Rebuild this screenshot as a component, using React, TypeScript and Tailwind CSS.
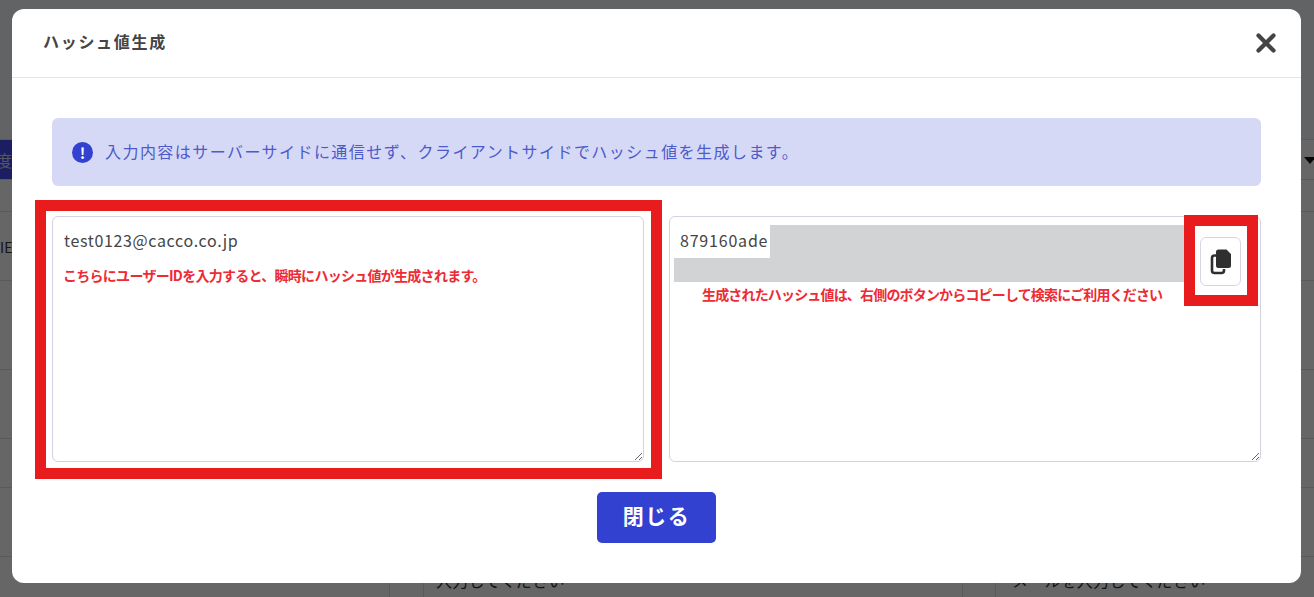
import { X } from 'lucide-react';

const font = "font-['Noto_Sans_CJK_JP','Noto_Sans',sans-serif]";

function CopyIcon() {
  return (
    <svg width="22" height="26" viewBox="0 0 22 26" fill="none">
      <path d="M8 6.5H4.5A2.5 2.5 0 0 0 2 9v12.5A2.5 2.5 0 0 0 4.500 24h7a2.500 2.500 0 0 0 2.500-2.500V20" stroke="#2f2f2f" strokeWidth="2.6" />
      <path d="M8.500 0.500h8l4.500 4.500v11.500a2.500 2.500 0 0 1-2.500 2.500h-10a2.500 2.500 0 0 1-2.500-2.500V3a2.500 2.500 0 0 1 2.500-2.500z" fill="#2f2f2f" />
    </svg>
  );
}

function Background() {
  return (
    <div className="flex flex-col h-[597px] bg-white text-[#333]">
      <div className="h-[140px] shrink-0 border-b border-[#dee2e6] bg-[#f6f8fb]" />
      <div className="h-[40px] shrink-0 flex justify-between border-b border-[#dee2e6]">
        <div className="w-[24px] bg-[#464cf5] flex justify-end items-center text-[16px] text-[#ddd] whitespace-nowrap pr-[12px]">度</div>
        <div className="w-[10px] overflow-hidden pt-[17px]">
          <div className="w-0 h-0 border-x-[6px] border-x-transparent border-t-[7px] border-t-[#111]" />
        </div>
      </div>
      <div className="h-[32px] shrink-0 border-b border-[#dee2e6]" />
      <div className="h-[69px] shrink-0 border-b border-[#dee2e6] flex items-center">
        <div className="-ml-[8px] mt-[3px] text-[14px] whitespace-nowrap">VIE</div>
      </div>
      <div className="h-[89px] shrink-0 border-b border-[#dee2e6]" />
      <div className="h-[69px] shrink-0 border-b border-[#dee2e6]" />
      <div className="h-[49px] shrink-0 border-b border-[#dee2e6]" />
      <div className="h-[69px] shrink-0 border-b border-[#dee2e6]" />
      <div className="flex-1 grid grid-cols-[390px_34px_538px_34px_1fr] text-[16px] overflow-hidden">
        <div className="border-r border-[#dee2e6]" />
        <div className="border-r border-[#dee2e6]" />
        <div className="pl-[12px] pt-[11px] leading-[24px] tracking-[0.2px]">入力してください</div>
        <div className="border-x border-[#dee2e6]" />
        <div className="pl-[16px] pt-[11px] leading-[24px] tracking-[0.2px]">メールを入力してください</div>
      </div>
    </div>
  );
}

export default function App() {
  return (
    <div className={`relative h-[597px] w-full overflow-hidden ${font}`}>
      <Background />

      {/* backdrop + modal */}
      <div className="absolute inset-0 bg-black/60 pt-[9px] px-[12px]">
        <div className="w-[1289px] h-[574px] bg-white rounded-[12px] overflow-hidden">
          <div className="h-[69px] border-b border-[#e4e4e4] flex items-center justify-between pl-[31px] pr-[20px]">
            <h2 className="text-[16px] font-bold text-[#444] tracking-[1.7px] pb-[4px]">ハッシュ値生成</h2>
            <X size={30} strokeWidth={3.4} className="text-[#444]" />
          </div>

          <div className="px-[40px] pt-[40px]">
            <div className="h-[68px] rounded-[6px] bg-[#d6d9f5] flex items-center pl-[20px] gap-[12px] text-[16px] tracking-[1.45px] text-[#4c5acb]">
              <span className="w-[21px] h-[21px] rounded-full bg-[#3241d0] text-white text-[15px] font-bold flex items-center justify-center leading-none tracking-normal">!</span>
              <span className="pb-[3px]">入力内容はサーバーサイドに通信せず、クライアントサイドでハッシュ値を生成します。</span>
            </div>

            <div className="grid grid-cols-2 gap-[25px] mt-[30px]">
              <div className="relative h-[246px]">
                <textarea
                  defaultValue="test0123@cacco.co.jp"
                  className="block w-full h-full border border-[#d2d2e0] rounded-[6px] px-[11px] pt-[10px] text-[16px] leading-[26px] tracking-[0.65px] text-[#444] outline-none"
                />
                <p className="absolute left-[11px] top-[49px] text-[14px] font-bold leading-[20px] text-[#ee2a35] tracking-[-0.72px]">
                  こちらにユーザーIDを入力すると、瞬時にハッシュ値が生成されます。
                </p>
                <div className="absolute -left-[17px] -top-[16px] w-[627px] h-[279px] border-[11px] border-[#e81c1c]" />
              </div>

              <div className="relative h-[246px]">
                <textarea
                  defaultValue="879160ade"
                  className="block w-full h-full border border-[#d2d2e0] rounded-[6px] px-[10px] pt-[10px] text-[16px] leading-[26px] tracking-[0.8px] text-[#444] outline-none"
                />
                {/* redacted part of the hash */}
                <div className="absolute left-[5px] top-[9px] w-[510px] h-[57px] flex flex-col">
                  <div className="h-[33px] flex">
                    <div className="w-[96px]" />
                    <div className="flex-1 bg-[#d1d3d5]" />
                  </div>
                  <div className="flex-1 bg-[#d1d3d5]" />
                </div>
                <p className="absolute left-[33px] top-[68px] text-[14px] font-bold leading-[20px] text-[#ee2a35] tracking-[-0.83px]">
                  生成されたハッシュ値は、右側のボタンからコピーして検索にご利用ください
                </p>
                <button className="absolute left-[531px] top-[21px] w-[41px] h-[49px] bg-white border border-[#d5d7e2] rounded-[6px] flex items-center justify-center">
                  <CopyIcon />
                </button>
                <div className="absolute left-[515px] -top-[1px] w-[74px] h-[91px] border-[11px] border-[#e81c1c]" />
              </div>
            </div>

            <div className="flex justify-center mt-[30px]">
              <button className="w-[119px] h-[51px] rounded-[5px] bg-[#3241d0] text-white text-[21px] font-bold tracking-[1.5px] pb-[3px]">閉じる</button>
            </div>
          </div>
        </div>
      </div>
    </div>
  );
}
